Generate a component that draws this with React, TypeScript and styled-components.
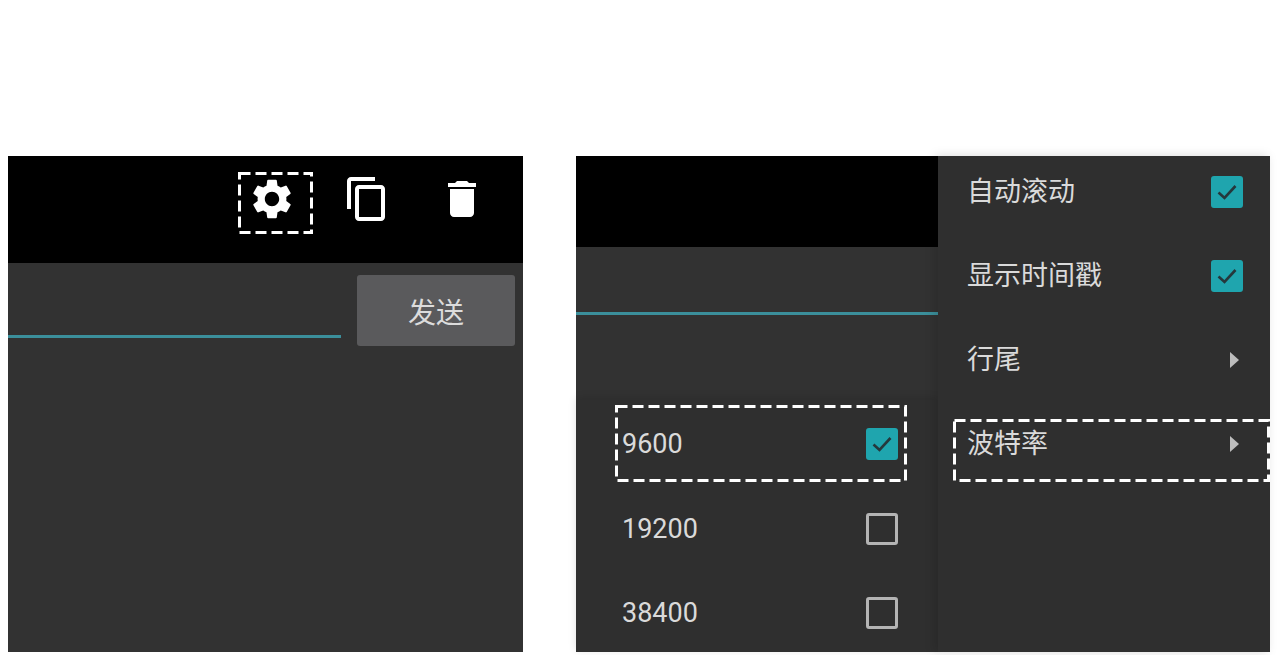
import React from 'react';
import styled, { createGlobalStyle } from 'styled-components';
import { MdContentCopy, MdDelete, MdSettings } from 'react-icons/md';

const GlobalStyle = createGlobalStyle`
  html, body {
    margin: 0;
    background: #fff;
  }
`;

type RowProps = {
  label: string;
  checked?: boolean;
};

const CheckBox = ({ checked }: { checked?: boolean }) => (
  <Box $checked={checked}>
    {checked && (
      <svg width="22" height="18" viewBox="0 0 22 18">
        <path d="M2.5 9.5 L8.5 15 L19.5 3" fill="none" stroke="#25383c" strokeWidth="2.6" />
      </svg>
    )}
  </Box>
);

const Dashes = ({ className }: { className?: string }) => (
  <DashedFrame className={className}>
    <rect />
  </DashedFrame>
);

const BaudRow = ({ label, checked }: RowProps) => (
  <SubRow>
    <ItemText>{label}</ItemText>
    <CheckBox checked={checked} />
  </SubRow>
);

const App = () => {
  return (
    <>
      <GlobalStyle />
      <Page>
        <LeftScreen>
          <LeftToolbar>
            <ToolIcon>
              <MdSettings size={48} />
              <GearDashes />
            </ToolIcon>
            <ToolIcon>
              <MdContentCopy size={48} />
            </ToolIcon>
            <ToolIcon>
              <MdDelete size={48} />
            </ToolIcon>
          </LeftToolbar>
          <SendRow>
            <LeftInput />
            <SendButton>发送</SendButton>
          </SendRow>
        </LeftScreen>

        <RightScreen>
          <RightMain>
            <RightToolbar />
            <RightInput />
            <BaudMenu>
              <BaudRow label="9600" checked />
              <SubRowMark />
              <BaudRow label="19200" />
              <BaudRow label="38400" />
            </BaudMenu>
          </RightMain>
          <SideMenu>
            <MenuList>
              <MenuRow>
                <ItemText>自动滚动</ItemText>
                <CheckBox checked />
              </MenuRow>
              <MenuRow>
                <ItemText>显示时间戳</ItemText>
                <CheckBox checked />
              </MenuRow>
              <MenuRow>
                <ItemText>行尾</ItemText>
                <Arrow />
              </MenuRow>
              <MenuRow>
                <ItemText>波特率</ItemText>
                <Arrow />
                <BaudDashes />
              </MenuRow>
            </MenuList>
          </SideMenu>
        </RightScreen>
      </Page>
    </>
  );
};

const Page = styled.div`
  box-sizing: border-box;
  width: 1278px;
  height: 655px;
  padding: 156px 8px 3px;
  display: flex;
  column-gap: 53px;
  overflow: hidden;
  background: #fff;
  font-family: Roboto, 'Noto Sans CJK SC', sans-serif;
`;

const LeftScreen = styled.section`
  width: 515px;
  display: flex;
  flex-direction: column;
  background: #323232;
`;

const LeftToolbar = styled.div`
  box-sizing: border-box;
  height: 107px;
  padding: 19px 14px 0 0;
  display: flex;
  justify-content: flex-end;
  column-gap: 0;
  background: #000;
`;

const ToolIcon = styled.div`
  position: relative;
  width: 95px;
  height: 48px;
  display: flex;
  justify-content: center;
  color: #fff;
`;

const DashedFrame = styled.svg`
  position: absolute;
  overflow: visible;
  pointer-events: none;

  rect {
    x: 1.5px;
    y: 1.5px;
    width: calc(100% - 3px);
    height: calc(100% - 3px);
    fill: none;
    stroke: #fff;
    stroke-width: 3px;
    stroke-dasharray: 11 5;
  }
`;

const GearDashes = styled(Dashes)`
  left: 14px;
  top: -3px;
  width: 75px;
  height: 62px;
`;

const SendRow = styled.div`
  padding: 12px 8px 0 0;
  display: flex;
  column-gap: 16px;
`;

const LeftInput = styled.div`
  box-sizing: border-box;
  width: 333px;
  height: 63px;
  border-bottom: 3px solid #3b8f9b;
`;

const SendButton = styled.button`
  width: 158px;
  height: 71px;
  padding: 0;
  border: none;
  border-radius: 3px;
  background: #5a5a5c;
  color: #dcdcdc;
  font-family: inherit;
  font-size: 28px;
`;

const RightScreen = styled.section`
  flex: 1;
  display: flex;
  background: #323232;
`;

const RightMain = styled.div`
  width: 362px;
  display: flex;
  flex-direction: column;
`;

const RightToolbar = styled.div`
  height: 91px;
  background: #000;
`;

const RightInput = styled.div`
  box-sizing: border-box;
  height: 68px;
  border-bottom: 3px solid #3b8f9b;
`;

const BaudMenu = styled.div`
  position: relative;
  margin-top: auto;
  height: 252px;
  padding-top: 2px;
  box-sizing: border-box;
  overflow: hidden;
  background: #2f2f2f;
  box-shadow: 0 -2px 8px rgba(0, 0, 0, 0.12);
`;

const SubRow = styled.div`
  box-sizing: border-box;
  height: 84.5px;
  padding: 0 40px 0 46px;
  display: flex;
  align-items: center;
  justify-content: space-between;
`;

const SubRowMark = styled(Dashes)`
  left: 39px;
  top: 5px;
  width: 292px;
  height: 77px;
`;

const SideMenu = styled.div`
  flex: 1;
  position: relative;
  overflow: hidden;
  background: #2f2f2f;
  box-shadow: -3px 0 10px rgba(0, 0, 0, 0.15);
`;

const MenuList = styled.div`
  margin-top: -6px;
  display: flex;
  flex-direction: column;
`;

const MenuRow = styled.div`
  position: relative;
  box-sizing: border-box;
  height: 84px;
  padding: 0 27px 0 29px;
  display: flex;
  align-items: center;
  justify-content: space-between;
`;

const BaudDashes = styled(Dashes)`
  left: 15px;
  top: 17px;
  width: 317px;
  height: 63px;
`;

const ItemText = styled.span`
  font-size: 27px;
  line-height: 36px;
  color: #dadada;
`;

const Box = styled.div<{ $checked?: boolean }>`
  box-sizing: border-box;
  width: 32px;
  height: 32px;
  display: flex;
  align-items: center;
  justify-content: center;
  border-radius: 3px;
  border: ${(p) => (p.$checked ? 'none' : '3px solid #b4b4b4')};
  background: ${(p) => (p.$checked ? '#1fa5ae' : 'transparent')};
`;

const Arrow = styled.i`
  width: 0;
  height: 0;
  margin-right: 4px;
  border-style: solid;
  border-width: 8px 0 8px 9px;
  border-color: transparent transparent transparent #bdbdbd;
`;

export default App;
